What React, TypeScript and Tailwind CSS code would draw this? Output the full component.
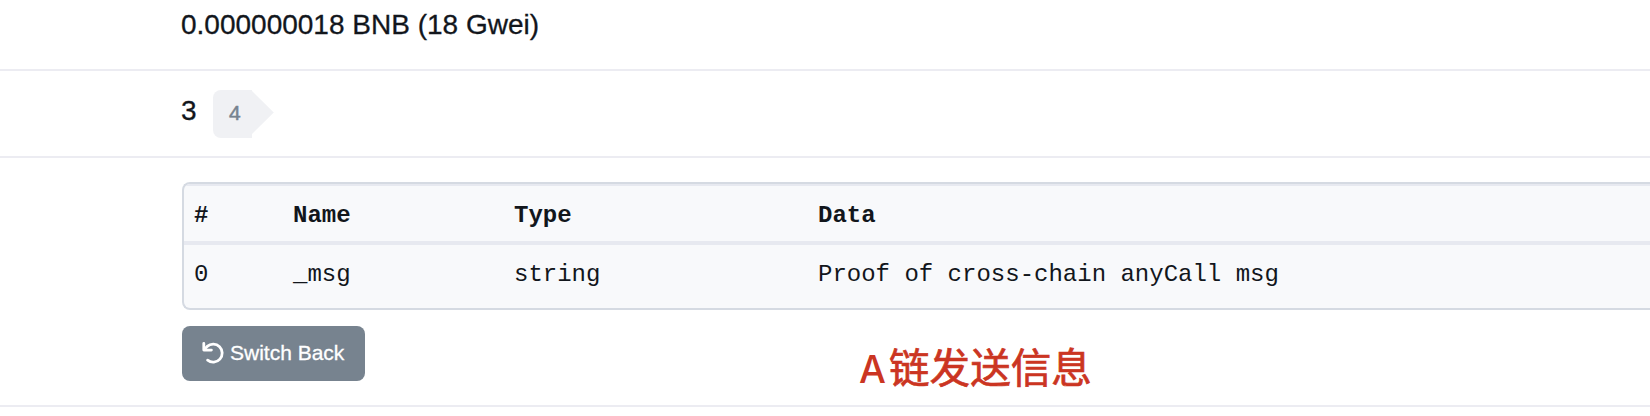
import type { ReactNode } from "react";

function Mono({ children, className }: { children: ReactNode; className: string }) {
  return (
    <span
      className={`block shrink-0 whitespace-pre font-['Courier_New','Liberation_Mono',monospace] text-[24px] leading-[32px] ${className}`}
    >
      {children}
    </span>
  );
}

function UndoIcon() {
  return (
    <svg width="22" height="22" viewBox="0 0 22 22" fill="none" stroke="currentColor" className="mb-[2px] shrink-0">
      <path d="M1.8 1.4V8.1H9.4" strokeWidth="2.8" strokeLinejoin="round" strokeLinecap="round" />
      <path d="M2.4 7.2L5.2 4.4A9 9 0 1 1 5.6 18.2" strokeWidth="2.8" strokeLinecap="round" strokeLinejoin="round" />
    </svg>
  );
}

export default function App() {
  return (
    <div className="h-[416px] w-full overflow-hidden bg-white font-['Liberation_Sans',Arial,sans-serif] text-[#12161c]">
      <div className="flex h-[71px] items-start border-b-2 border-[#ececf2] pl-[181px] pt-[9px]">
        <span className="whitespace-nowrap text-[28px] leading-[32px] [-webkit-text-stroke:0.3px]">
          0.000000018 BNB (18 Gwei)
        </span>
      </div>

      <div className="flex h-[87px] items-start border-b-2 border-[#ececf2] pl-[181px] pt-[19px]">
        <span className="mt-[5px] w-[32px] text-[28px] leading-[32px] [-webkit-text-stroke:0.3px]">3</span>
        <div className="flex">
          <span className="flex h-[48px] w-[39px] items-start rounded-l-lg bg-[#f0f1f4] pl-[16px] pt-[10px] text-[21px] leading-[26px] text-[#77838f] [-webkit-text-stroke:0.5px]">
            4
          </span>
          <svg width="22" height="48" viewBox="0 0 22 48" className="text-[#f0f1f4]">
            <path d="M0 1L21.8 22.5L0 44Z" fill="currentColor" />
          </svg>
        </div>
      </div>

      <div className="relative flex h-[249px] flex-col items-start border-b-2 border-[#ececf2] pl-[182px] pt-[24px]">
        <div className="h-[128px] w-full overflow-hidden rounded-l-lg border-y-2 border-l-2 border-[#d5dae2] bg-[#f8f9fb]">
          <div className="flex h-[61px] border-b-4 border-t-2 border-[#e7e9f0] pl-[10px] pt-[14px] font-bold">
            <Mono className="w-[99px]">#</Mono>
            <Mono className="w-[221px]">Name</Mono>
            <Mono className="w-[304px]">Type</Mono>
            <Mono className="w-[480px]">Data</Mono>
          </div>
          <div className="flex h-[63px] pl-[10px] pt-[14px]">
            <Mono className="w-[99px]">0</Mono>
            <Mono className="w-[221px]">_msg</Mono>
            <Mono className="w-[304px]">string</Mono>
            <Mono className="w-[480px]">Proof of cross-chain anyCall msg</Mono>
          </div>
        </div>
        <button className="mt-[16px] flex h-[55px] w-[183px] items-center gap-[6px] rounded-lg bg-[#77838f] pl-[20px] text-white">
          <UndoIcon />
          <span className="mb-[2px] whitespace-nowrap text-[21px] leading-[26px] [-webkit-text-stroke:0.3px]">
            Switch Back
          </span>
        </button>
        <span className="absolute left-[859px] top-[178px] flex items-baseline whitespace-nowrap text-[40.6px] leading-[60px] text-[#cb3522]">
          <span className="w-[30px] font-['Inter',sans-serif] text-[38px] font-medium">A</span>
          <span className="font-['Noto_Sans_CJK_SC',sans-serif] [-webkit-text-stroke:0.7px]">链发送信息</span>
        </span>
      </div>
    </div>
  );
}
